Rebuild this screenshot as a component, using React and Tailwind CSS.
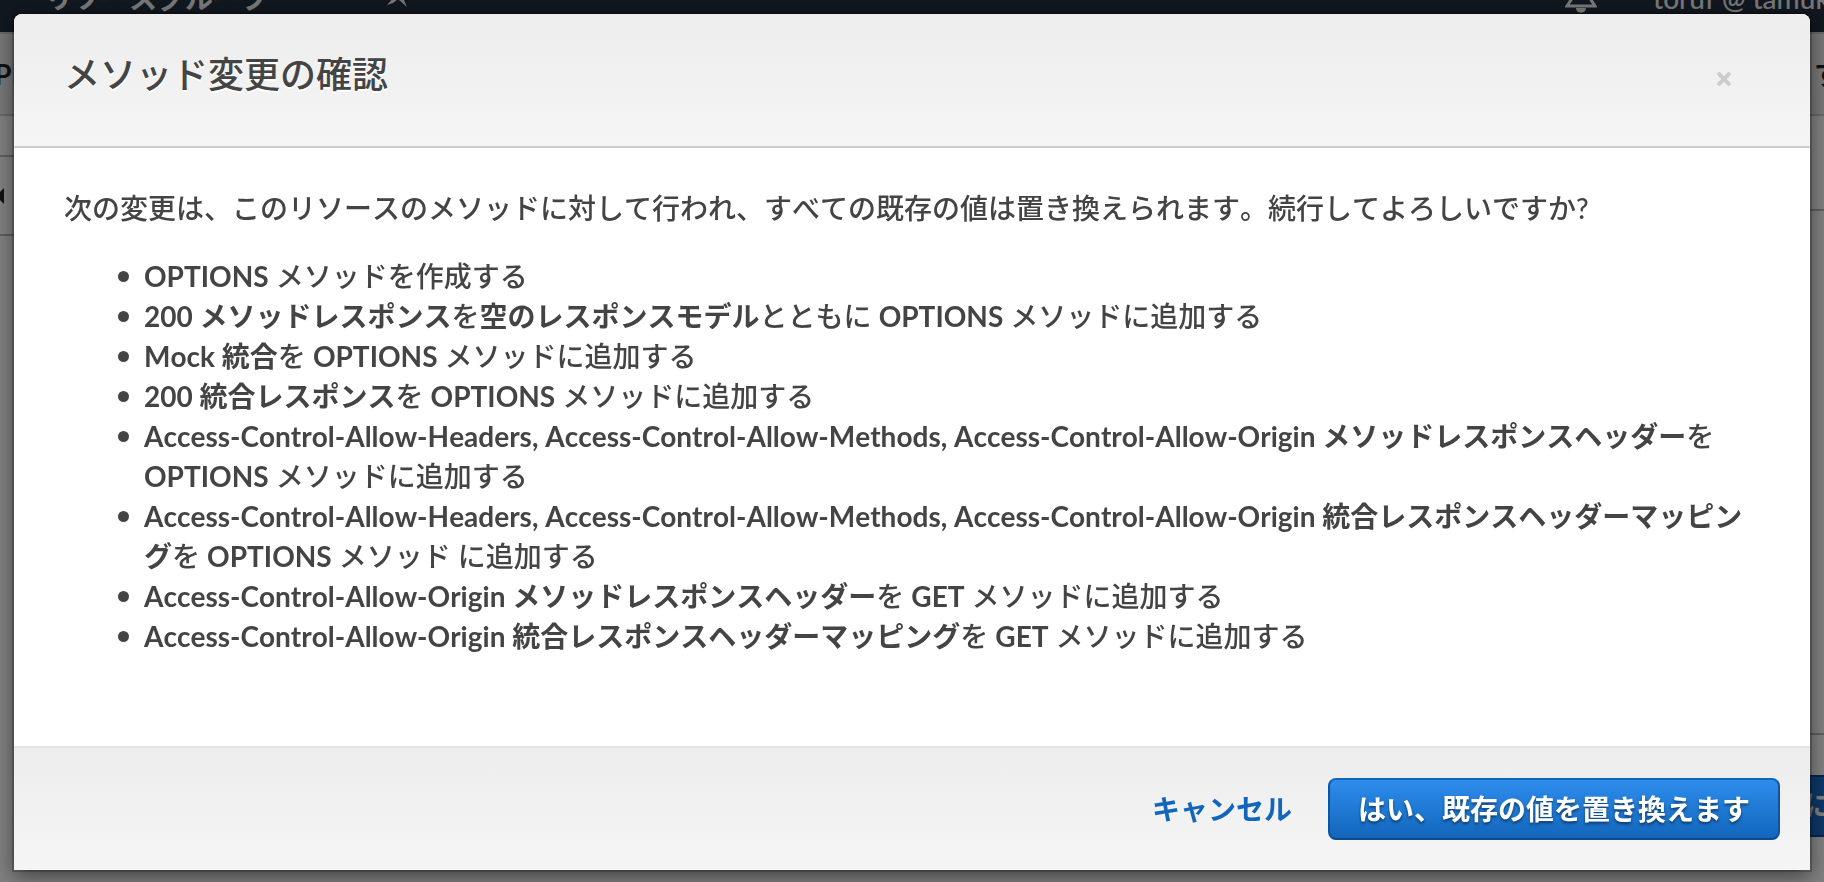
const FONT = "font-['Lato','Noto_Sans_CJK_JP',sans-serif]";

const HEADERS = 'Access-Control-Allow-Headers, Access-Control-Allow-Methods, Access-Control-Allow-Origin';

function Backdrop() {
  return (
    <div aria-hidden="true" inert className="-mt-11 flex min-h-screen flex-col bg-white text-[28px] leading-10 text-[#222]">
      <div className="flex h-[76px] items-center justify-between bg-[#232f3e] pt-2 pl-[45px] whitespace-nowrap text-[#eee]">
        <div className="flex items-center gap-[114px] font-bold">
          <span>リソースグループ</span>
          <svg className="size-8" viewBox="0 0 32 32" fill="currentColor">
            <path d="M4 23 L12 14 L9 9 L21 1 L28 12 L20 16 L24 25 L15 17 L10 21 Z" />
          </svg>
        </div>
        <div className="flex items-center gap-[56px]">
          <svg className="h-9 w-8" viewBox="0 0 32 36" fill="none" stroke="currentColor" strokeWidth="3">
            <path d="M2 26 L6 20 V11 a10 10 0 0 1 20 0 V20 L30 26 Z" />
            <path d="M12.500 28 a3.500 3.500 0 0 0 7 0" fill="currentColor" />
          </svg>
          <span className="w-[171px] overflow-hidden font-medium">toruf @ tamuk</span>
        </div>
      </div>
      <div className="flex h-[84px] items-center justify-between overflow-hidden border-y-2 border-[#ccc] bg-[#eee] font-bold">
        <span className="w-5 overflow-hidden text-right whitespace-nowrap" dir="rtl">API</span>
        <span className="w-[10px] overflow-hidden">す</span>
      </div>
      <div className="flex grow">
        <div className="flex w-[439px] flex-col">
          <div className="h-[41px] border-b-2 border-[#bbb]" />
          <div className="flex h-[79px] items-center border-b-2 border-[#bbb]">
            <svg className="h-4 w-1" viewBox="0 0 4 16" fill="currentColor">
              <path d="M4 0 V16 L0 12 V4 Z" />
            </svg>
          </div>
          <div className="ml-[17px] grow border-x-2 border-[#bbb]" />
        </div>
        <div className="flex grow flex-col items-end">
          <div className="h-[95px] w-full border-b-2 border-[#bbb]" />
          <div className="h-[524px] w-full border-b-2 border-[#bbb]" />
          <div className="mt-10 h-[62px] w-5 overflow-hidden border-y-2 border-[#0a4a94] bg-[#1a6fce] py-2 font-bold text-white">に</div>
        </div>
      </div>
    </div>
  );
}

function Item({ children }) {
  return (
    <li className="relative before:absolute before:top-[15px] before:-left-[26px] before:size-[11px] before:rounded-full before:bg-[#444]">
      {children}
    </li>
  );
}

function ChangeList() {
  return (
    <ul className="mt-7 pl-20">
      <Item><b>OPTIONS</b> メソッドを作成する</Item>
      <Item><b>200 メソッドレスポンス</b>を<b>空のレスポンスモデル</b>とともに <b>OPTIONS</b> メソッドに追加する</Item>
      <Item><b>Mock 統合</b>を <b>OPTIONS</b> メソッドに追加する</Item>
      <Item><b>200 統合レスポンス</b>を <b>OPTIONS</b> メソッドに追加する</Item>
      <Item><b>{HEADERS} メソッドレスポンスヘッダー</b>を <b>OPTIONS</b> メソッドに追加する</Item>
      <Item><b>{HEADERS} 統合レスポンスヘッダーマッピング</b>を <b>OPTIONS</b> メソッド に追加する</Item>
      <Item><b>Access-Control-Allow-Origin メソッドレスポンスヘッダー</b>を <b>GET</b> メソッドに追加する</Item>
      <Item><b>Access-Control-Allow-Origin 統合レスポンスヘッダーマッピング</b>を <b>GET</b> メソッドに追加する</Item>
    </ul>
  );
}

export default function App() {
  return (
    <div lang="ja" className={"h-screen overflow-hidden [font-kerning:none] " + FONT}>
      <Backdrop />
      <div className="fixed inset-0 bg-black/50 p-[14px]">
        <section
          role="dialog"
          aria-modal="true"
          aria-labelledby="dialog-title"
          className="overflow-hidden rounded-t-lg bg-white text-[28px] leading-10 font-medium text-[#444] shadow-[0_6px_20px_rgba(0,0,0,0.5),0_0_0_2px_rgba(0,0,0,0.2)]"
        >
          <header className="flex items-start justify-between border-b-2 border-[#ccc] bg-linear-to-b from-[#ededed] to-[#f5f5f5] px-[50px] pt-9 pb-12">
            <h1 id="dialog-title" className="text-4xl leading-12 font-medium [text-shadow:0_2px_0_#fff]">メソッド変更の確認</h1>
            <button type="button" aria-label="閉じる" className="mt-[22px] mr-[29px] text-[#ccc]">
              <svg className="size-[14px]" viewBox="0 0 14 14" stroke="currentColor" strokeWidth="4" strokeLinecap="round">
                <path d="M2.2 2.2 L11.8 11.8 M11.8 2.2 L2.2 11.8" />
              </svg>
            </button>
          </header>
          <div className="px-[50px] pt-10 pb-[90px]">
            <p>次の変更は、このリソースのメソッドに対して行われ、すべての既存の値は置き換えられます。続行してよろしいですか?</p>
            <ChangeList />
          </div>
          <footer className="flex items-center justify-end gap-9 border-t-2 border-[#e4e4e4] bg-linear-to-b from-[#ededed] to-[#f5f5f5] p-[30px] font-bold">
            <button type="button" className="text-[#1166bb]">キャンセル</button>
            <button
              type="button"
              className="rounded-lg border-2 border-t-[#1166bb] border-x-[#0d569f] border-b-[#0b4a8a] bg-linear-to-b from-[#2e8ded] to-[#1166bb] px-7 py-[9px] text-white [text-shadow:0_2px_3px_rgba(0,0,0,0.5)]"
            >
              はい、既存の値を置き換えます
            </button>
          </footer>
        </section>
      </div>
    </div>
  );
}
